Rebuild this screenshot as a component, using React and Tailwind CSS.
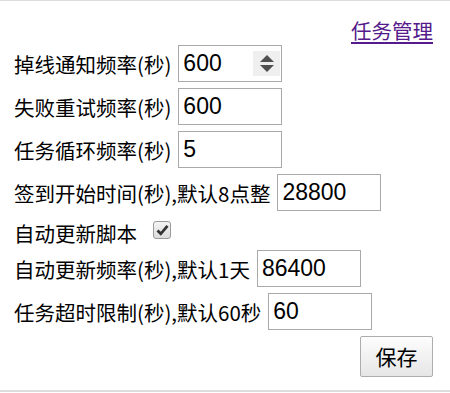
import { useState } from "react"

const labelFont = { fontFamily: '"Noto Sans CJK SC", "Liberation Sans", sans-serif' }

const Field = ({ label, value, onChange, spin }) => (
  <div className="flex items-center h-[37px]">
    <span className="text-[20.5px] leading-[26px] text-black whitespace-nowrap">{label}</span>
    <div className="relative ml-[7px]">
      <input
        type="text"
        value={value}
        onChange={(e) => onChange(e.target.value)}
        className="w-[104px] h-[37px] border border-[#a9a9a9] pl-[4px] pr-[30px] text-[23px] text-black bg-white outline-none"
        style={{ fontFamily: '"Liberation Sans", Arial, sans-serif' }}
      />
      {spin && (
        <span className="absolute right-[2px] top-[6px] w-[27px] h-[25px] bg-[#efefef] flex flex-col items-center justify-center gap-[3px]">
          <svg width="14" height="7" viewBox="0 0 14 7">
            <path d="M7 0 L14 7 L0 7 Z" fill="#505050" />
          </svg>
          <svg width="14" height="7" viewBox="0 0 14 7">
            <path d="M0 0 L14 0 L7 7 Z" fill="#505050" />
          </svg>
        </span>
      )}
    </div>
  </div>
)

export default function App() {
  const [form, setForm] = useState({
    offline: "600",
    retry: "600",
    loop: "5",
    signStart: "28800",
    autoUpdate: true,
    updateFreq: "86400",
    timeout: "60",
  })

  const set = (key) => (v) => setForm({ ...form, [key]: v })

  return (
    <div className="w-[450px] h-[393px] bg-white" style={labelFont}>
      <div className="h-[392px] border-t border-b-2 border-[#dcdcdc] pl-[14px] pr-[17px] pt-[16px]">
        <div className="flex justify-end h-[26px] mb-[2px]">
          <a href="#" className="text-[20.5px] leading-[26px] text-[#551a8b] underline underline-offset-[3px]">
            任务管理
          </a>
        </div>

        <div className="flex flex-col gap-[6px]">
          <Field label="掉线通知频率(秒)" value={form.offline} onChange={set("offline")} spin />
          <Field label="失败重试频率(秒)" value={form.retry} onChange={set("retry")} />
          <Field label="任务循环频率(秒)" value={form.loop} onChange={set("loop")} />
          <Field label="签到开始时间(秒),默认8点整" value={form.signStart} onChange={set("signStart")} />

          <div className="flex items-center h-[27px] pt-[4px]">
            <span className="text-[20.5px] leading-[26px] text-black">自动更新脚本</span>
            <button
              type="button"
              onClick={() => setForm({ ...form, autoUpdate: !form.autoUpdate })}
              className="ml-[16px] mb-[6px] w-[18px] h-[18px] rounded-[3px] border border-[#9a9a9a] bg-gradient-to-b from-[#f4f4f4] to-[#dcdcdc] flex items-center justify-center"
            >
              {form.autoUpdate && (
                <svg width="13" height="12" viewBox="0 0 13 12">
                  <path d="M1.5 6.5 L4.8 9.8 L11.5 1.8" fill="none" stroke="#333" strokeWidth="2.8" />
                </svg>
              )}
            </button>
          </div>

          <Field label="自动更新频率(秒),默认1天" value={form.updateFreq} onChange={set("updateFreq")} />
          <Field label="任务超时限制(秒),默认60秒" value={form.timeout} onChange={set("timeout")} />

          <div className="flex justify-end">
            <button
              type="button"
              className="w-[73px] h-[41px] border border-[#adadad] rounded-[2px] bg-gradient-to-b from-[#fdfdfd] to-[#e6e6e6] text-[21px] text-black"
            >
              保存
            </button>
          </div>
        </div>
      </div>
    </div>
  )
}
